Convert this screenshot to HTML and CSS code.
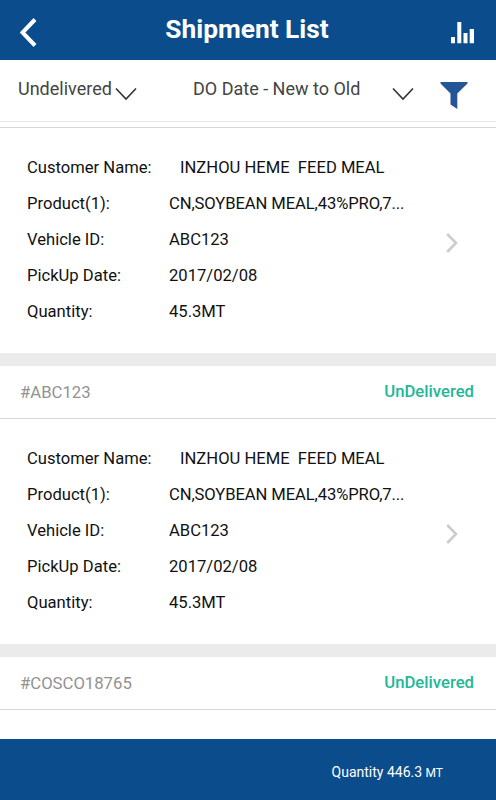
FILE: index.html
```html
<!DOCTYPE html>
<html lang="en">
<head>
  <meta charset="UTF-8" />
  <title>Shipment List</title>
  <link rel="stylesheet" href="styles.css">
</head>
<body>

<header>
  <svg class="back" width="18" height="30" viewBox="0 0 18 30"><path d="M15 1.500 L2.500 14.500 L15 27.500" fill="none" stroke="#fff" stroke-width="4"/></svg>
  <h1>Shipment List</h1>
  <svg class="chart" width="24" height="22" viewBox="0 0 24 22"><path d="M0 15h4v6.300H0zM6.300 0h4v21.300h-4zM12.500 11h4v10.300h-4zM18.700 7h4.300v14.300h-4.300z" fill="#fff"/></svg>
</header>

<div class="filters">
  <span class="status-filter">Undelivered</span>
  <svg class="arrow" width="22" height="14" viewBox="0 0 22 14"><path d="M1 1.500 L11 12 L21 1.500" fill="none" stroke="#333" stroke-width="1.600"/></svg>
  <span class="sort-filter">DO Date - New to Old</span>
  <svg class="arrow" width="22" height="14" viewBox="0 0 22 14"><path d="M1 1.500 L11 12 L21 1.500" fill="none" stroke="#333" stroke-width="1.600"/></svg>
  <svg class="funnel" width="28" height="28" viewBox="0 0 28 28"><path d="M0.500 0H27.500V1.500L17.300 11.500V27L10.500 22.500V11.500L0.500 1.500Z" fill="#245596"/></svg>
</div>

<main>
  <div class="card first">
    <div class="card-body">
      <dl>
        <dt>Customer Name:</dt><dd class="customer">INZHOU HEME&nbsp; FEED MEAL</dd>
        <dt>Product(1):</dt><dd class="product">CN,SOYBEAN MEAL,43%PRO,7...</dd>
        <dt>Vehicle ID:</dt><dd>ABC123</dd>
        <dt>PickUp Date:</dt><dd>2017/02/08</dd>
        <dt>Quantity:</dt><dd>45.3MT</dd>
      </dl>
      <svg class="next" width="12" height="20" viewBox="0 0 12 20"><path d="M1.200 1 L10 10 L1.200 19" fill="none" stroke="#ccc" stroke-width="2.600"/></svg>
    </div>
  </div>

  <div class="card">
    <div class="card-head">
      <span class="number">#ABC123</span>
      <span class="status">UnDelivered</span>
    </div>
    <div class="card-body">
      <dl>
        <dt>Customer Name:</dt><dd class="customer">INZHOU HEME&nbsp; FEED MEAL</dd>
        <dt>Product(1):</dt><dd class="product">CN,SOYBEAN MEAL,43%PRO,7...</dd>
        <dt>Vehicle ID:</dt><dd>ABC123</dd>
        <dt>PickUp Date:</dt><dd>2017/02/08</dd>
        <dt>Quantity:</dt><dd>45.3MT</dd>
      </dl>
      <svg class="next" width="12" height="20" viewBox="0 0 12 20"><path d="M1.200 1 L10 10 L1.200 19" fill="none" stroke="#ccc" stroke-width="2.600"/></svg>
    </div>
  </div>

  <div class="card">
    <div class="card-head">
      <span class="number">#COSCO18765</span>
      <span class="status">UnDelivered</span>
    </div>
  </div>
</main>

<footer>
  <span>Quantity 446.3 <small>MT</small></span>
</footer>

</body>
</html>
```
FILE: styles.css
```css
* {
  box-sizing: border-box;
}

body {
  font-family: Roboto, sans-serif;
  background-color: #fff;
  color: #111;
  margin: 0;
  height: 800px;
  overflow: hidden;
  display: flex;
  flex-direction: column;
}

svg {
  display: block;
  flex-shrink: 0;
}

header {
  background-color: #0b4d8c;
  color: white;
  height: 60px;
  flex-shrink: 0;
  display: grid;
  grid-template-columns: 46px 1fr 46px;
  padding: 0 2px 0 0;
}

h1 {
  margin: 0;
  font-size: 26.3px;
  line-height: 59px;
  font-weight: 700;
  text-align: center;
}

.back {
  margin: 18px 0 0 20px;
}

.chart {
  margin: 22px 0 0 3px;
}

.filters {
  display: flex;
  height: 62px;
  flex-shrink: 0;
  padding: 0 18px;
  border-bottom: 1px solid #e6e6e6;
  color: #444;
  font-size: 18px;
  line-height: 58px;
  white-space: nowrap;
}

.status-filter {
  width: 97px;
}

.arrow {
  margin-top: 27px;
}

.sort-filter {
  width: 199px;
  margin-left: 56px;
}

.funnel {
  margin: 22px 0 0 26px;
}

main {
  flex: 1;
  min-height: 0;
  overflow: hidden;
  padding-top: 5px;
}

.card {
  background-color: white;
  border-top: 13px solid #ebebeb;
}

.card.first {
  border-top: 1px solid #d8d8d8;
}

.card-head {
  display: flex;
  justify-content: space-between;
  height: 53px;
  padding: 0 22px 0 20px;
  border-bottom: 1px solid #d8d8d8;
  font-size: 16.7px;
  font-weight: 500;
  line-height: 51px;
}

.number {
  color: #929292;
  font-weight: 400;
  line-height: 53px;
}

.status {
  color: #22b797;
}

.card-body {
  display: flex;
  align-items: center;
  justify-content: space-between;
  height: 225px;
  padding: 0 38px 0 27px;
}

dl {
  display: grid;
  grid-template-columns: 142px auto;
  margin: 0;
  padding-bottom: 1px;
  font-size: 16.6px;
  line-height: 36px;
  white-space: nowrap;
}

dd {
  margin: 0;
}

.customer {
  padding-left: 11px;
}

.product {
  letter-spacing: -0.1px;
}

.next {
  margin-top: 5px;
}

footer {
  background-color: #0b4d8c;
  color: white;
  height: 61px;
  flex-shrink: 0;
  padding-right: 53px;
  font-size: 14px;
  line-height: 66px;
  text-align: right;
}

footer small {
  font-size: 12px;
}
```
